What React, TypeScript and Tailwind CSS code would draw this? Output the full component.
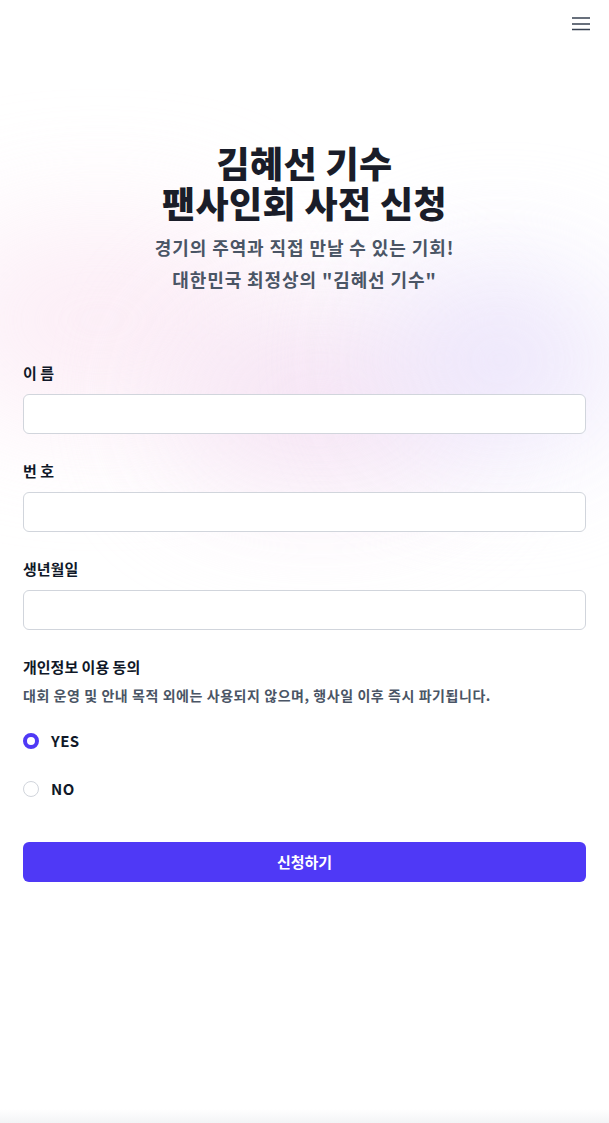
import { useState } from "react"

const font = { fontFamily: '"Noto Sans CJK KR", "Noto Sans", sans-serif' }

function Field({ label }: { label: string }) {
  return (
    <div className="flex flex-col gap-[11px]">
      <label className="text-[15px] font-bold leading-[20px] text-gray-900">{label}</label>
      <input
        type="text"
        className="h-10 w-full rounded-md border border-gray-300 bg-white px-3 text-sm text-gray-900 focus:outline-none"
      />
    </div>
  )
}

function Radio({ checked, label, onClick }: { checked: boolean; label: string; onClick: () => void }) {
  return (
    <button type="button" onClick={onClick} className="flex h-6 items-center gap-3">
      <span
        className={
          checked
            ? "h-4 w-4 rounded-full border-[4.5px] border-[#4f39f6] bg-white"
            : "h-4 w-4 rounded-full border border-gray-300 bg-white"
        }
      />
      <span className="text-[15px] font-bold tracking-[0.03em] text-gray-900">{label}</span>
    </button>
  )
}

export default function App() {
  const [agree, setAgree] = useState(true)

  return (
    <div style={font} className="relative min-h-[1123px] overflow-hidden bg-white">
      {/* soft background blobs */}
      <div className="pointer-events-none absolute left-[-60px] top-[220px] h-[200px] w-[320px] rounded-full bg-[#fbe7f3] opacity-70 blur-[60px]" />
      <div className="pointer-events-none absolute left-[170px] top-[310px] h-[180px] w-[300px] rounded-full bg-[#f5e2f3] opacity-90 blur-[60px]" />
      <div className="pointer-events-none absolute left-[380px] top-[270px] h-[180px] w-[240px] rounded-full bg-[#ebe4fb] opacity-90 blur-[60px]" />
      <div className="pointer-events-none absolute bottom-0 left-0 h-[14px] w-full bg-gradient-to-b from-white to-[#f3f4f6]" />

      <header className="relative flex h-12 items-center justify-end px-[15px]">
        <button type="button" className="p-1" aria-label="menu">
          <svg width="18" height="14" viewBox="0 0 18 14" fill="none" stroke="#374151" strokeWidth="1.6">
            <path d="M0 1h18M0 7h18M0 12.5h18" />
          </svg>
        </button>
      </header>

      <main className="relative px-[23px]">
        <section className="mt-[94px] text-center">
          <h1 className="text-[36px] font-black leading-[40px] tracking-[0.01em] text-[#1a1d29]">
            김혜선 기수
            <br />
            팬사인회 사전 신청
          </h1>
          <p className="mt-[9px] text-[18px] font-bold leading-[32px] tracking-[0.05em] text-gray-600">
            경기의 주역과 직접 만날 수 있는 기회!
            <br />
            대한민국 최정상의 "김혜선 기수"
          </p>
        </section>

        <form className="mt-[68px] flex flex-col gap-[27px]" onSubmit={(e) => e.preventDefault()}>
          <Field label="이 름" />
          <Field label="번 호" />
          <Field label="생년월일" />

          <div className="flex flex-col">
            <p className="text-[15px] font-bold leading-[20px] text-gray-900">개인정보 이용 동의</p>
            <p className="mt-[8px] text-[14px] font-bold leading-[20px] tracking-[0.04em] text-gray-600">
              대회 운영 및 안내 목적 외에는 사용되지 않으며, 행사일 이후 즉시 파기됩니다.
            </p>
            <div className="mt-[24px] flex flex-col gap-6">
              <Radio checked={agree} label="YES" onClick={() => setAgree(true)} />
              <Radio checked={!agree} label="NO" onClick={() => setAgree(false)} />
            </div>
          </div>

          <button
            type="submit"
            className="mt-[14px] h-10 w-full rounded-md bg-[#4f39f6] text-[15px] font-bold text-white"
          >
            신청하기
          </button>
        </form>
      </main>
    </div>
  )
}
